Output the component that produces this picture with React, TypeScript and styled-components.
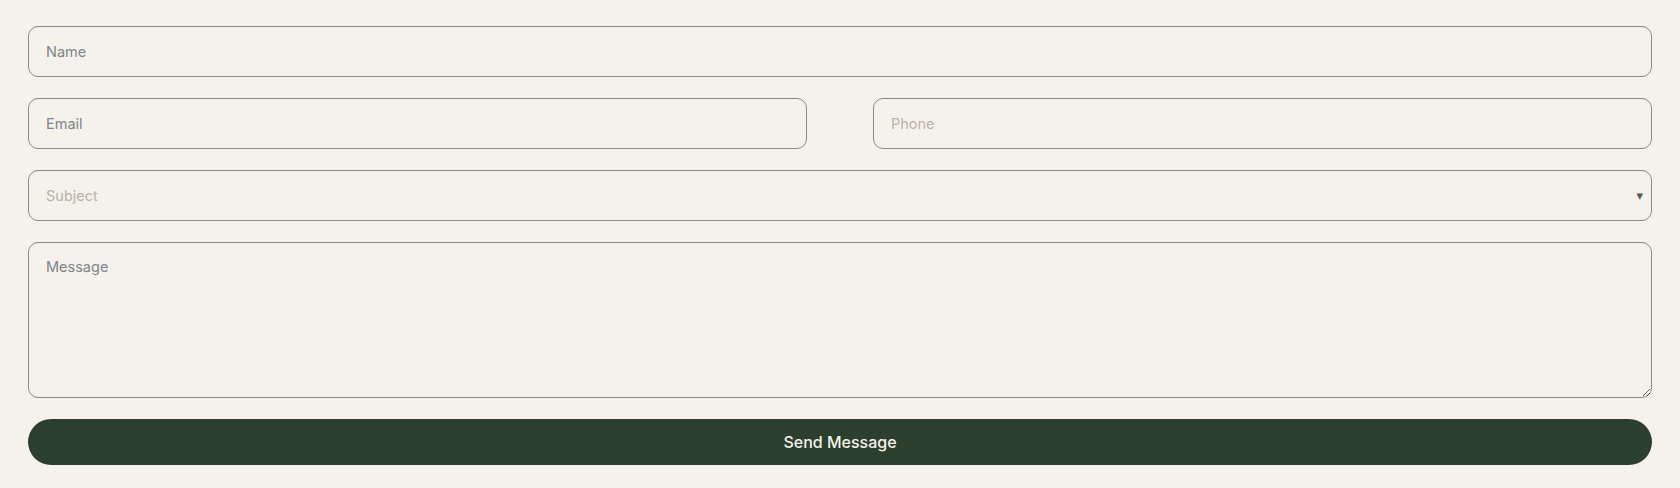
import React from "react";
import styled, { createGlobalStyle } from "styled-components";

const GlobalStyle = createGlobalStyle`
  html, body {
    margin: 0;
    padding: 0;
    background: #f5f2eb;
    overflow: hidden;
  }
  * {
    box-sizing: border-box;
  }
`;

const fieldFont = `"Inter", "Noto Sans", sans-serif`;

const ContactForm = (): JSX.Element => {
  return (
    <FormContainer onSubmit={(e) => e.preventDefault()}>
      <Field placeholder="Name" />
      <Row>
        <Field placeholder="Email" />
        <Field placeholder="Phone" $muted />
      </Row>
      <SelectWrap>
        <Select defaultValue="">
          <option value="" disabled>
            Subject
          </option>
          <option value="general">General Inquiry</option>
          <option value="booking">Booking</option>
        </Select>
        <Caret>▾</Caret>
      </SelectWrap>
      <MessageArea placeholder="Message" />
      <SendButton type="submit">Send Message</SendButton>
    </FormContainer>
  );
};

const App = (): JSX.Element => (
  <>
    <GlobalStyle />
    <ContactForm />
  </>
);

export default App;

const FormContainer = styled.form`
  display: flex;
  flex-direction: column;
  gap: 21px;
  padding: 26px 28px 22px;
  width: 100%;
`;

const Row = styled.div`
  display: grid;
  grid-template-columns: 1fr 1fr;
  column-gap: 66px;
`;

const Field = styled.input<{ $muted?: boolean }>`
  width: 100%;
  height: 51px;
  padding: 0 17px;
  border: 1px solid #8a8a7f;
  border-radius: 10px;
  background: transparent;
  font-family: ${fieldFont};
  font-size: 14.5px;
  color: #333;
  outline: none;

  &::placeholder {
    color: ${(p) => (p.$muted ? "#b9b2a6" : "#80858b")};
  }
`;

const SelectWrap = styled.div`
  position: relative;
`;

const Select = styled.select`
  width: 100%;
  height: 51px;
  padding: 0 17px;
  border: 1px solid #8a8a7f;
  border-radius: 10px;
  background: transparent;
  font-family: ${fieldFont};
  font-size: 14.5px;
  color: #b9b2a6;
  appearance: none;
  outline: none;
`;

const Caret = styled.span`
  position: absolute;
  right: 9px;
  top: 50%;
  transform: translateY(-52%);
  font-family: "DejaVu Sans", sans-serif;
  font-size: 13px;
  color: #555;
  pointer-events: none;
`;

const MessageArea = styled.textarea`
  width: 100%;
  height: 156px;
  padding: 15px 17px;
  border: 1px solid #8a8a7f;
  border-radius: 10px;
  background: transparent;
  font-family: ${fieldFont};
  font-size: 14.5px;
  color: #333;
  outline: none;
  display: block;

  &::placeholder {
    color: #80858b;
  }
`;

const SendButton = styled.button`
  width: 100%;
  height: 46px;
  border: none;
  border-radius: 23px;
  background: #2c3e2c;
  color: #f5f2eb;
  font-family: ${fieldFont};
  font-size: 16px;
  font-weight: 500;
  cursor: pointer;
`;
